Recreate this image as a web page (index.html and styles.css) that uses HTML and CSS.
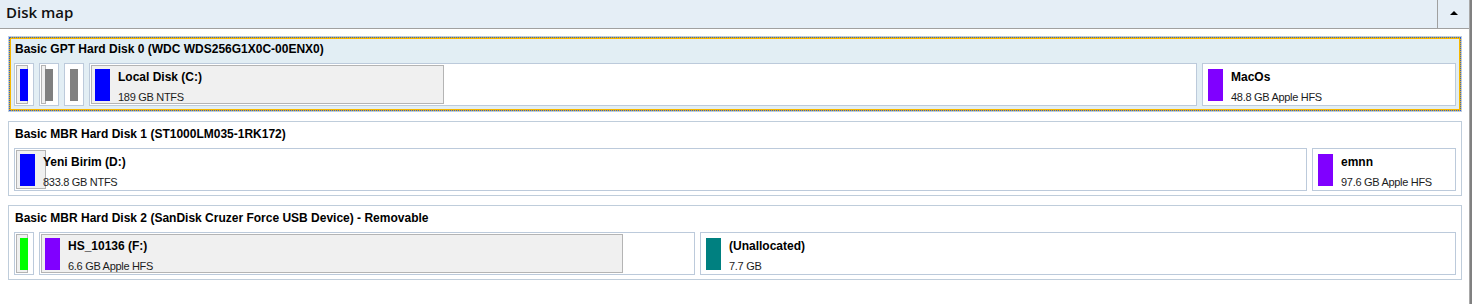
FILE: index.html
```html
<!DOCTYPE html>
<html lang="en">
<head>
  <meta charset="UTF-8" />
  <title>Disk map</title>
  <link rel="stylesheet" href="styles.css">
</head>
<body>
  <div class="window">
    <div class="panel">
      <div class="panel-header">
        <span class="panel-title">Disk map</span>
        <button class="collapse-btn" type="button"><span class="arrow-up"></span></button>
      </div>

      <div class="disk-list">
        <!-- Disk 0 (selected) -->
        <div class="disk selected">
          <div class="disk-title">Basic GPT Hard Disk 0 (WDC WDS256G1X0C-00ENX0)</div>
          <div class="partitions">
            <div class="partition" style="width:20px">
              <div class="used" style="width:12px"></div>
              <span class="swatch ntfs"></span>
            </div>
            <div class="partition" style="width:20px">
              <div class="used" style="width:5px"></div>
              <span class="swatch other"></span>
            </div>
            <div class="partition" style="width:20px">
              <span class="swatch other"></span>
            </div>
            <div class="partition" style="width:1108px">
              <div class="used" style="width:353px"></div>
              <span class="swatch ntfs"></span>
              <div class="part-label">
                <span class="part-name">Local Disk (C:)</span>
                <span class="part-info">189 GB NTFS</span>
              </div>
            </div>
            <div class="partition" style="width:254px">
              <span class="swatch hfs"></span>
              <div class="part-label">
                <span class="part-name">MacOs</span>
                <span class="part-info">48.8 GB Apple HFS</span>
              </div>
            </div>
          </div>
        </div>

        <!-- Disk 1 -->
        <div class="disk">
          <div class="disk-title">Basic MBR Hard Disk 1 (ST1000LM035-1RK172)</div>
          <div class="partitions">
            <div class="partition" style="width:1293px">
              <div class="used" style="width:30px"></div>
              <span class="swatch ntfs"></span>
              <div class="part-label">
                <span class="part-name">Yeni Birim (D:)</span>
                <span class="part-info">833.8 GB NTFS</span>
              </div>
            </div>
            <div class="partition" style="width:144px">
              <span class="swatch hfs"></span>
              <div class="part-label">
                <span class="part-name">emnn</span>
                <span class="part-info">97.6 GB Apple HFS</span>
              </div>
            </div>
          </div>
        </div>

        <!-- Disk 2 -->
        <div class="disk">
          <div class="disk-title">Basic MBR Hard Disk 2 (SanDisk Cruzer Force USB Device) - Removable</div>
          <div class="partitions">
            <div class="partition" style="width:20px">
              <div class="used" style="width:12px"></div>
              <span class="swatch fat"></span>
            </div>
            <div class="partition" style="width:656px">
              <div class="used" style="width:582px"></div>
              <span class="swatch hfs"></span>
              <div class="part-label">
                <span class="part-name">HS_10136 (F:)</span>
                <span class="part-info">6.6 GB Apple HFS</span>
              </div>
            </div>
            <div class="partition" style="width:756px">
              <span class="swatch unallocated"></span>
              <div class="part-label">
                <span class="part-name">(Unallocated)</span>
                <span class="part-info">7.7 GB</span>
              </div>
            </div>
          </div>
        </div>
      </div>
    </div>
    <div class="scroll-edge"></div>
  </div>
</body>
</html>
```

FILE: styles.css
```css
body {
  margin: 0;
  background: #ffffff;
  font-family: "Liberation Sans", Arial, sans-serif;
  color: #000000;
}
.window {
  display: flex;
  height: 304px;
}
.panel {
  width: 1469px;
}
.scroll-edge {
  width: 3px;
  background: linear-gradient(to right, #a8a8a8 1px, #808080 1px);
}

/* header bar */
.panel-header {
  display: flex;
  height: 28px;
  background: #e5eef6;
  border-bottom: 1px solid #a0a0a0;
}
.panel-title {
  flex: 1;
  padding-left: 6px;
  font-family: "Open Sans", sans-serif;
  font-weight: 600;
  font-size: 15px;
  line-height: 25px;
  color: #111111;
}
.collapse-btn {
  width: 32px;
  box-sizing: border-box;
  border: none;
  border-left: 1px solid #a0a0a0;
  background: transparent;
  display: flex;
  align-items: center;
  justify-content: center;
  padding: 0 0 3px;
}
.arrow-up {
  border-left: 4px solid transparent;
  border-right: 4px solid transparent;
  border-bottom: 4px solid #000000;
}

/* disks */
.disk-list {
  display: flex;
  flex-direction: column;
  gap: 9px;
  padding: 7px 7px 0 8px;
}
.disk {
  position: relative;
  border: 1px solid #bfcddb;
  padding: 0 5px 4px;
  background: #ffffff;
}
.disk.selected {
  padding-bottom: 5px;
  background: #e2eef4;
}
.disk.selected::before {
  content: "";
  position: absolute;
  inset: 0;
  border: 2px solid #f6b700;
}
.disk.selected::after {
  content: "";
  position: absolute;
  inset: 0;
  border: 1px dotted #2f5fd0;
}
.disk-title {
  height: 26px;
  line-height: 24px;
  padding-left: 1px;
  font-size: 12px;
  font-weight: bold;
}

/* partitions */
.partitions {
  display: flex;
  gap: 5px;
  height: 43px;
}
.partition {
  position: relative;
  display: flex;
  flex-shrink: 0;
  box-sizing: border-box;
  height: 43px;
  padding: 5px;
  border: 1px solid #bccadb;
  background: #ffffff;
  overflow: hidden;
}
.used {
  position: absolute;
  left: 1px;
  top: 1px;
  bottom: 1px;
  box-sizing: border-box;
  border: 1px solid #b4b4b4;
  background: #f0f0f0;
}
.swatch {
  position: relative;
  width: 15px;
  max-width: 100%;
  height: 32px;
}
.ntfs { background: #0000ff; }
.hfs { background: #8000ff; }
.other { background: #808080; }
.fat { background: #00ff00; }
.unallocated { background: #008080; }

.part-label {
  position: relative;
  display: flex;
  flex-direction: column;
  margin-left: 8px;
  padding-top: 1px;
  white-space: nowrap;
}
.part-name {
  font-size: 12px;
  font-weight: bold;
  line-height: 14px;
}
.part-info {
  margin-top: 6px;
  font-size: 11px;
  letter-spacing: -0.3px;
  line-height: 14px;
  color: #1c1c1c;
}
```
